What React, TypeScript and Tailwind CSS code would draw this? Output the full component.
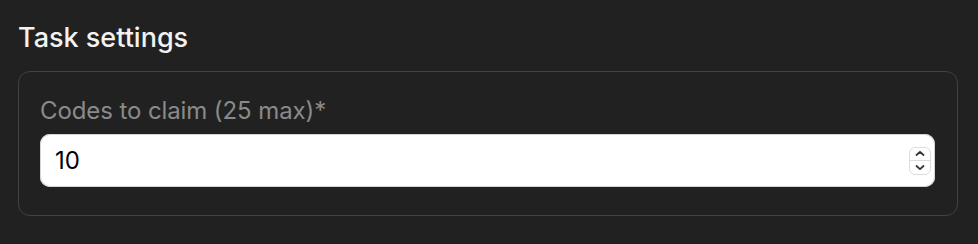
import React from "react";

export default function App() {
  return (
    <div
      className="w-[978px] h-[244px] bg-[#212121] pl-[18px] pr-[20px] pt-[20px] overflow-hidden"
      style={{ fontFamily: "Inter, 'Noto Sans', sans-serif" }}
    >
      <h2 className="text-[27px] leading-[36px] font-medium text-[#f2f2f2]">
        Task settings
      </h2>
      <div className="mt-[15px] rounded-[12px] border border-[#424242] pl-[21px] pr-[22px] pt-[23px] pb-[28px]">
        <label className="block text-[24px] leading-[32px] text-[#8a8a8a] mb-[7px] tracking-[-0.1px]">
          Codes to claim (25 max)*
        </label>
        <div className="flex items-center h-[53px] bg-white rounded-[10px] pl-[15px] pr-[4px] shadow-[inset_0_0_0_1px_#d4d4d4]">
          <span className="flex-1 text-[24px] leading-[32px] text-black">10</span>
          <div className="flex flex-col w-[22px] h-[28px] rounded-[6px] border border-[#dcdcdc] bg-white">
            <div className="flex-1 flex items-center justify-center border-b border-[#dcdcdc]">
              <svg width="10" height="7" viewBox="0 0 10 7">
                <path d="M1.5 5 L5 1.8 L8.5 5" fill="none" stroke="#333" strokeWidth="1.8" strokeLinecap="round" strokeLinejoin="round" />
              </svg>
            </div>
            <div className="flex-1 flex items-center justify-center">
              <svg width="10" height="7" viewBox="0 0 10 7">
                <path d="M1.5 2 L5 5.2 L8.5 2" fill="none" stroke="#333" strokeWidth="1.8" strokeLinecap="round" strokeLinejoin="round" />
              </svg>
            </div>
          </div>
        </div>
      </div>
    </div>
  );
}
